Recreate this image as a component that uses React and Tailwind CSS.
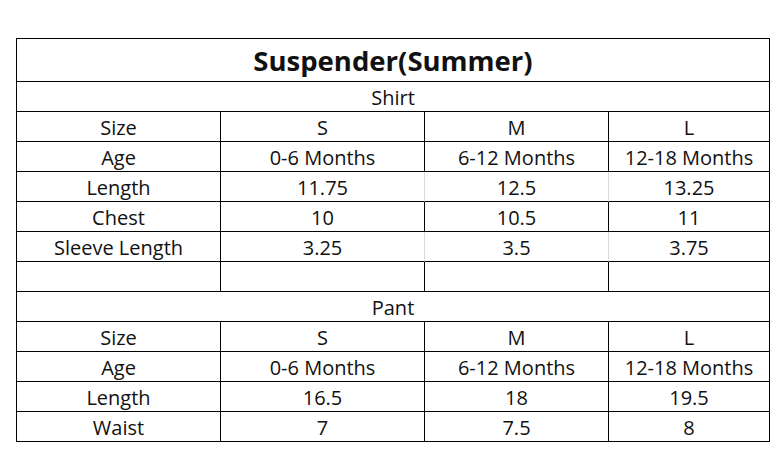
const shirt = [
  ["Size", "S", "M", "L"],
  ["Age", "0-6 Months", "6-12 Months", "12-18 Months"],
  ["Length", "11.75", "12.5", "13.25", true],
  ["Chest", "10", "10.5", "11"],
  ["Sleeve Length", "3.25", "3.5", "3.75", true],
  ["", "", "", ""],
];

const pant = [
  ["Size", "S", "M", "L"],
  ["Age", "0-6 Months", "6-12 Months", "12-18 Months"],
  ["Length", "16.5", "18", "19.5"],
  ["Waist", "7", "7.5", "8"],
];

function Row({ cells }) {
  const light = cells[4];
  return (
    <>
      {cells.slice(0, 4).map((c, i) => (
        <div
          key={i}
          className={
            "h-[30px] border-b border-r flex items-center justify-center pt-[3px] " +
            (light && (i === 1 || i === 2) ? "border-r-[#dadada] border-b-black" : "border-black")
          }
        >
          {c}
        </div>
      ))}
    </>
  );
}

function Section({ title, rows }) {
  return (
    <>
      <div className="col-span-4 h-[30px] border-b border-r border-black flex items-center justify-center pt-[3px]">
        {title}
      </div>
      {rows.map((r, i) => (
        <Row key={i} cells={r} />
      ))}
    </>
  );
}

export default function App() {
  return (
    <div className="w-[784px] h-[474px] bg-white pt-[38px] pl-[16px] text-[#111] text-[20px] font-['Open_Sans',sans-serif]">
      <div className="grid grid-cols-[204px_204px_184px_161px] w-[754px] border-l border-t border-black leading-none">
        <div className="col-span-4 h-[43px] border-b border-r border-black flex items-center justify-center font-bold text-[27.5px] pt-[2px]">
          Suspender(Summer)
        </div>
        <Section title="Shirt" rows={shirt} />
        <Section title="Pant" rows={pant} />
      </div>
    </div>
  );
}
